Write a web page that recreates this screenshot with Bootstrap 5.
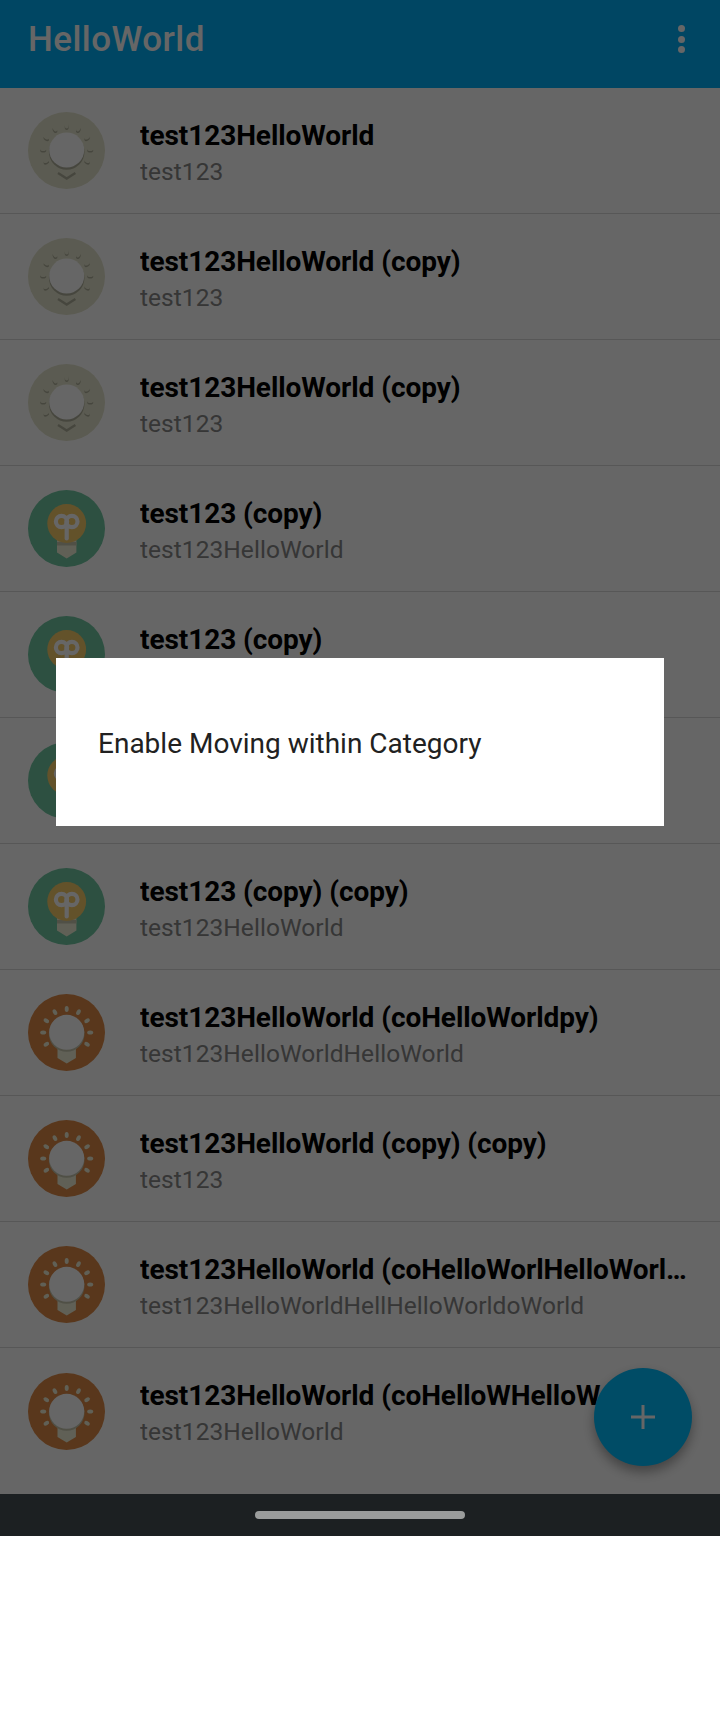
<!DOCTYPE html>
<html lang="en">
<head>
<meta charset="utf-8">
<title>HelloWorld</title>
<link href="https://cdn.jsdelivr.net/npm/bootstrap@5.3.0/dist/css/bootstrap.min.css" rel="stylesheet">
<style>
html,body{margin:0;background:#fff}
body{font-family:Roboto,"Liberation Sans",sans-serif;width:720px;height:1712px;overflow:hidden}
.phone-screen{height:1536px;overflow:hidden}
.app-view{height:1494px;overflow:hidden;background:#fff}
.app-bar{height:88px;background:#00aff7;padding:0 35.5px 10px 28px}
.app-name{font-size:35px;font-weight:500;color:#fff;line-height:1;margin:0;letter-spacing:.44px}
.more-dots{display:flex;flex-direction:column;gap:3.5px}
.more-dots i{display:block;width:7px;height:7px;border-radius:50%;background:#fff}
.entry{height:126px;padding:0 31px 0 28px;border:0;border-bottom:1px solid #d9d9d9;border-radius:0!important;gap:35px;background:transparent}
.lamp{width:77px;height:77px;flex:none}
.entry-body{min-width:0;flex:1;padding-top:6px}
.entry-title{font-size:28px;font-weight:700;color:#000;line-height:36px;letter-spacing:-.07px;white-space:nowrap;overflow:hidden;text-overflow:ellipsis}
.entry-sub{font-size:24.5px;color:#888;line-height:36px;letter-spacing:.05px;white-space:nowrap;overflow:hidden;text-overflow:ellipsis}
.fab-add{width:98px;height:98px;right:28px;top:1368px;background:#00bdff;box-shadow:0 6px 12px rgba(0,0,0,.35);border:0}
.scrim{inset:0 0 auto 0;height:1494px;background:rgba(0,0,0,.6)}
.sheet{left:56px;top:658px;width:608px;height:168px;background:#fff;padding:4px 0 0 42px}
.sheet-text{font-size:28px;color:#212121}
.nav-strip{height:42px;background:#1c2022}
.nav-pill{width:210px;height:8px;border-radius:4px;background:#9a9c9c}
</style>
</head>
<body>
<svg width="0" height="0" class="d-block" aria-hidden="true">
<defs>
<g id="rays">
<ellipse cx="38.7" cy="15" rx="2" ry="3"/>
<ellipse cx="38.7" cy="15" rx="2" ry="3" transform="rotate(30 38.7 38.5)"/>
<ellipse cx="38.7" cy="15" rx="2" ry="3" transform="rotate(60 38.7 38.5)"/>
<ellipse cx="38.7" cy="15" rx="2" ry="3" transform="rotate(90 38.7 38.5)"/>
<ellipse cx="38.7" cy="15" rx="2" ry="3" transform="rotate(120 38.7 38.5)"/>
<ellipse cx="38.7" cy="15" rx="2" ry="3" transform="rotate(-30 38.7 38.5)"/>
<ellipse cx="38.7" cy="15" rx="2" ry="3" transform="rotate(-60 38.7 38.5)"/>
<ellipse cx="38.7" cy="15" rx="2" ry="3" transform="rotate(-90 38.7 38.5)"/>
<ellipse cx="38.7" cy="15" rx="2" ry="3" transform="rotate(-120 38.7 38.5)"/>
</g>
<symbol id="lamp-pale" viewBox="0 0 77 77">
<circle cx="38.5" cy="38.5" r="38.5" fill="#e4e4cc"/>
<use href="#rays" fill="#b0b09c"/>
<use href="#rays" fill="#e4e4cc" transform="translate(0 -1.6)"/>
<circle cx="38.7" cy="40" r="17.8" fill="#b0b09c"/>
<circle cx="38.7" cy="38" r="17.5" fill="#fff"/>
<path d="M30 61l8.700 5.500 8.700-5.500" fill="none" stroke="#b0b09c" stroke-width="2.400"/>
</symbol>
<symbol id="lamp-mint" viewBox="0 0 77 77">
<circle cx="38.5" cy="38.5" r="38.5" fill="#70c8a2"/>
<path d="M29 48h19.400v14.500l-9.700 6-9.700-6z" fill="#f0f0d8"/>
<path d="M29 52h19.400v3.500H29z" fill="#c8c8b0"/>
<circle cx="38.7" cy="33.5" r="19.4" fill="#f8cc6a"/>
<g fill="none" stroke="#fff" stroke-width="4.200" stroke-linecap="round">
<circle cx="33.5" cy="31.5" r="5.600"/><circle cx="43.900" cy="31.500" r="5.600"/>
<path d="M38.700 33v15.500"/>
</g>
</symbol>
<symbol id="lamp-amber" viewBox="0 0 77 77">
<circle cx="38.5" cy="38.5" r="38.5" fill="#de8a46"/>
<use href="#rays" fill="#f0f0d8"/>
<path d="M29.500 50h18.400v14l-9.200 5.500-9.200-5.500z" fill="#f0f0d8"/>
<circle cx="38.7" cy="40" r="17.8" fill="#c8c8b0"/>
<circle cx="38.700" cy="38.300" r="17.500" fill="#fff"/>
</symbol>
</defs>
</svg>

<div class="phone-screen position-relative">
<div class="app-view">
<nav class="navbar app-bar d-flex justify-content-between align-items-center flex-nowrap">
<h1 class="app-name">HelloWorld</h1>
<span class="more-dots"><i></i><i></i><i></i></span>
</nav>
<div class="list-group list-group-flush">
<div class="list-group-item entry d-flex align-items-center"><svg class="lamp"><use href="#lamp-pale"/></svg><div class="entry-body"><div class="entry-title">test123HelloWorld</div><div class="entry-sub">test123</div></div></div>
<div class="list-group-item entry d-flex align-items-center"><svg class="lamp"><use href="#lamp-pale"/></svg><div class="entry-body"><div class="entry-title">test123HelloWorld (copy)</div><div class="entry-sub">test123</div></div></div>
<div class="list-group-item entry d-flex align-items-center"><svg class="lamp"><use href="#lamp-pale"/></svg><div class="entry-body"><div class="entry-title">test123HelloWorld (copy)</div><div class="entry-sub">test123</div></div></div>
<div class="list-group-item entry d-flex align-items-center"><svg class="lamp"><use href="#lamp-mint"/></svg><div class="entry-body"><div class="entry-title">test123 (copy)</div><div class="entry-sub">test123HelloWorld</div></div></div>
<div class="list-group-item entry d-flex align-items-center"><svg class="lamp"><use href="#lamp-mint"/></svg><div class="entry-body"><div class="entry-title">test123 (copy)</div><div class="entry-sub">test123HelloWorld</div></div></div>
<div class="list-group-item entry d-flex align-items-center"><svg class="lamp"><use href="#lamp-mint"/></svg><div class="entry-body"><div class="entry-title">test123 (copy)</div><div class="entry-sub">test123HelloWorld</div></div></div>
<div class="list-group-item entry d-flex align-items-center"><svg class="lamp"><use href="#lamp-mint"/></svg><div class="entry-body"><div class="entry-title">test123 (copy) (copy)</div><div class="entry-sub">test123HelloWorld</div></div></div>
<div class="list-group-item entry d-flex align-items-center"><svg class="lamp"><use href="#lamp-amber"/></svg><div class="entry-body"><div class="entry-title">test123HelloWorld (coHelloWorldpy)</div><div class="entry-sub">test123HelloWorldHelloWorld</div></div></div>
<div class="list-group-item entry d-flex align-items-center"><svg class="lamp"><use href="#lamp-amber"/></svg><div class="entry-body"><div class="entry-title">test123HelloWorld (copy) (copy)</div><div class="entry-sub">test123</div></div></div>
<div class="list-group-item entry d-flex align-items-center"><svg class="lamp"><use href="#lamp-amber"/></svg><div class="entry-body"><div class="entry-title">test123HelloWorld (coHelloWorlHelloWorldpy)</div><div class="entry-sub">test123HelloWorldHellHelloWorldoWorld</div></div></div>
<div class="list-group-item entry d-flex align-items-center"><svg class="lamp"><use href="#lamp-amber"/></svg><div class="entry-body"><div class="entry-title">test123HelloWorld (coHelloWHelloWorldorldpy)</div><div class="entry-sub">test123HelloWorld</div></div></div>
</div>
</div>
<button type="button" class="fab-add btn position-absolute rounded-circle d-flex align-items-center justify-content-center p-0" aria-label="Add">
<svg width="24" height="24" viewBox="0 0 24 24"><path d="M10.500 0h3v10.500H24v3H13.500V24h-3V13.500H0v-3h10.500z" fill="#fff"/></svg>
</button>
<div class="scrim position-absolute"></div>
<div class="sheet position-absolute d-flex align-items-center"><span class="sheet-text">Enable Moving within Category</span></div>
<div class="nav-strip d-flex align-items-center justify-content-center"><span class="nav-pill"></span></div>
</div>
<script src="https://cdn.jsdelivr.net/npm/bootstrap@5.3.0/dist/js/bootstrap.bundle.min.js"></script>
</body>
</html>
